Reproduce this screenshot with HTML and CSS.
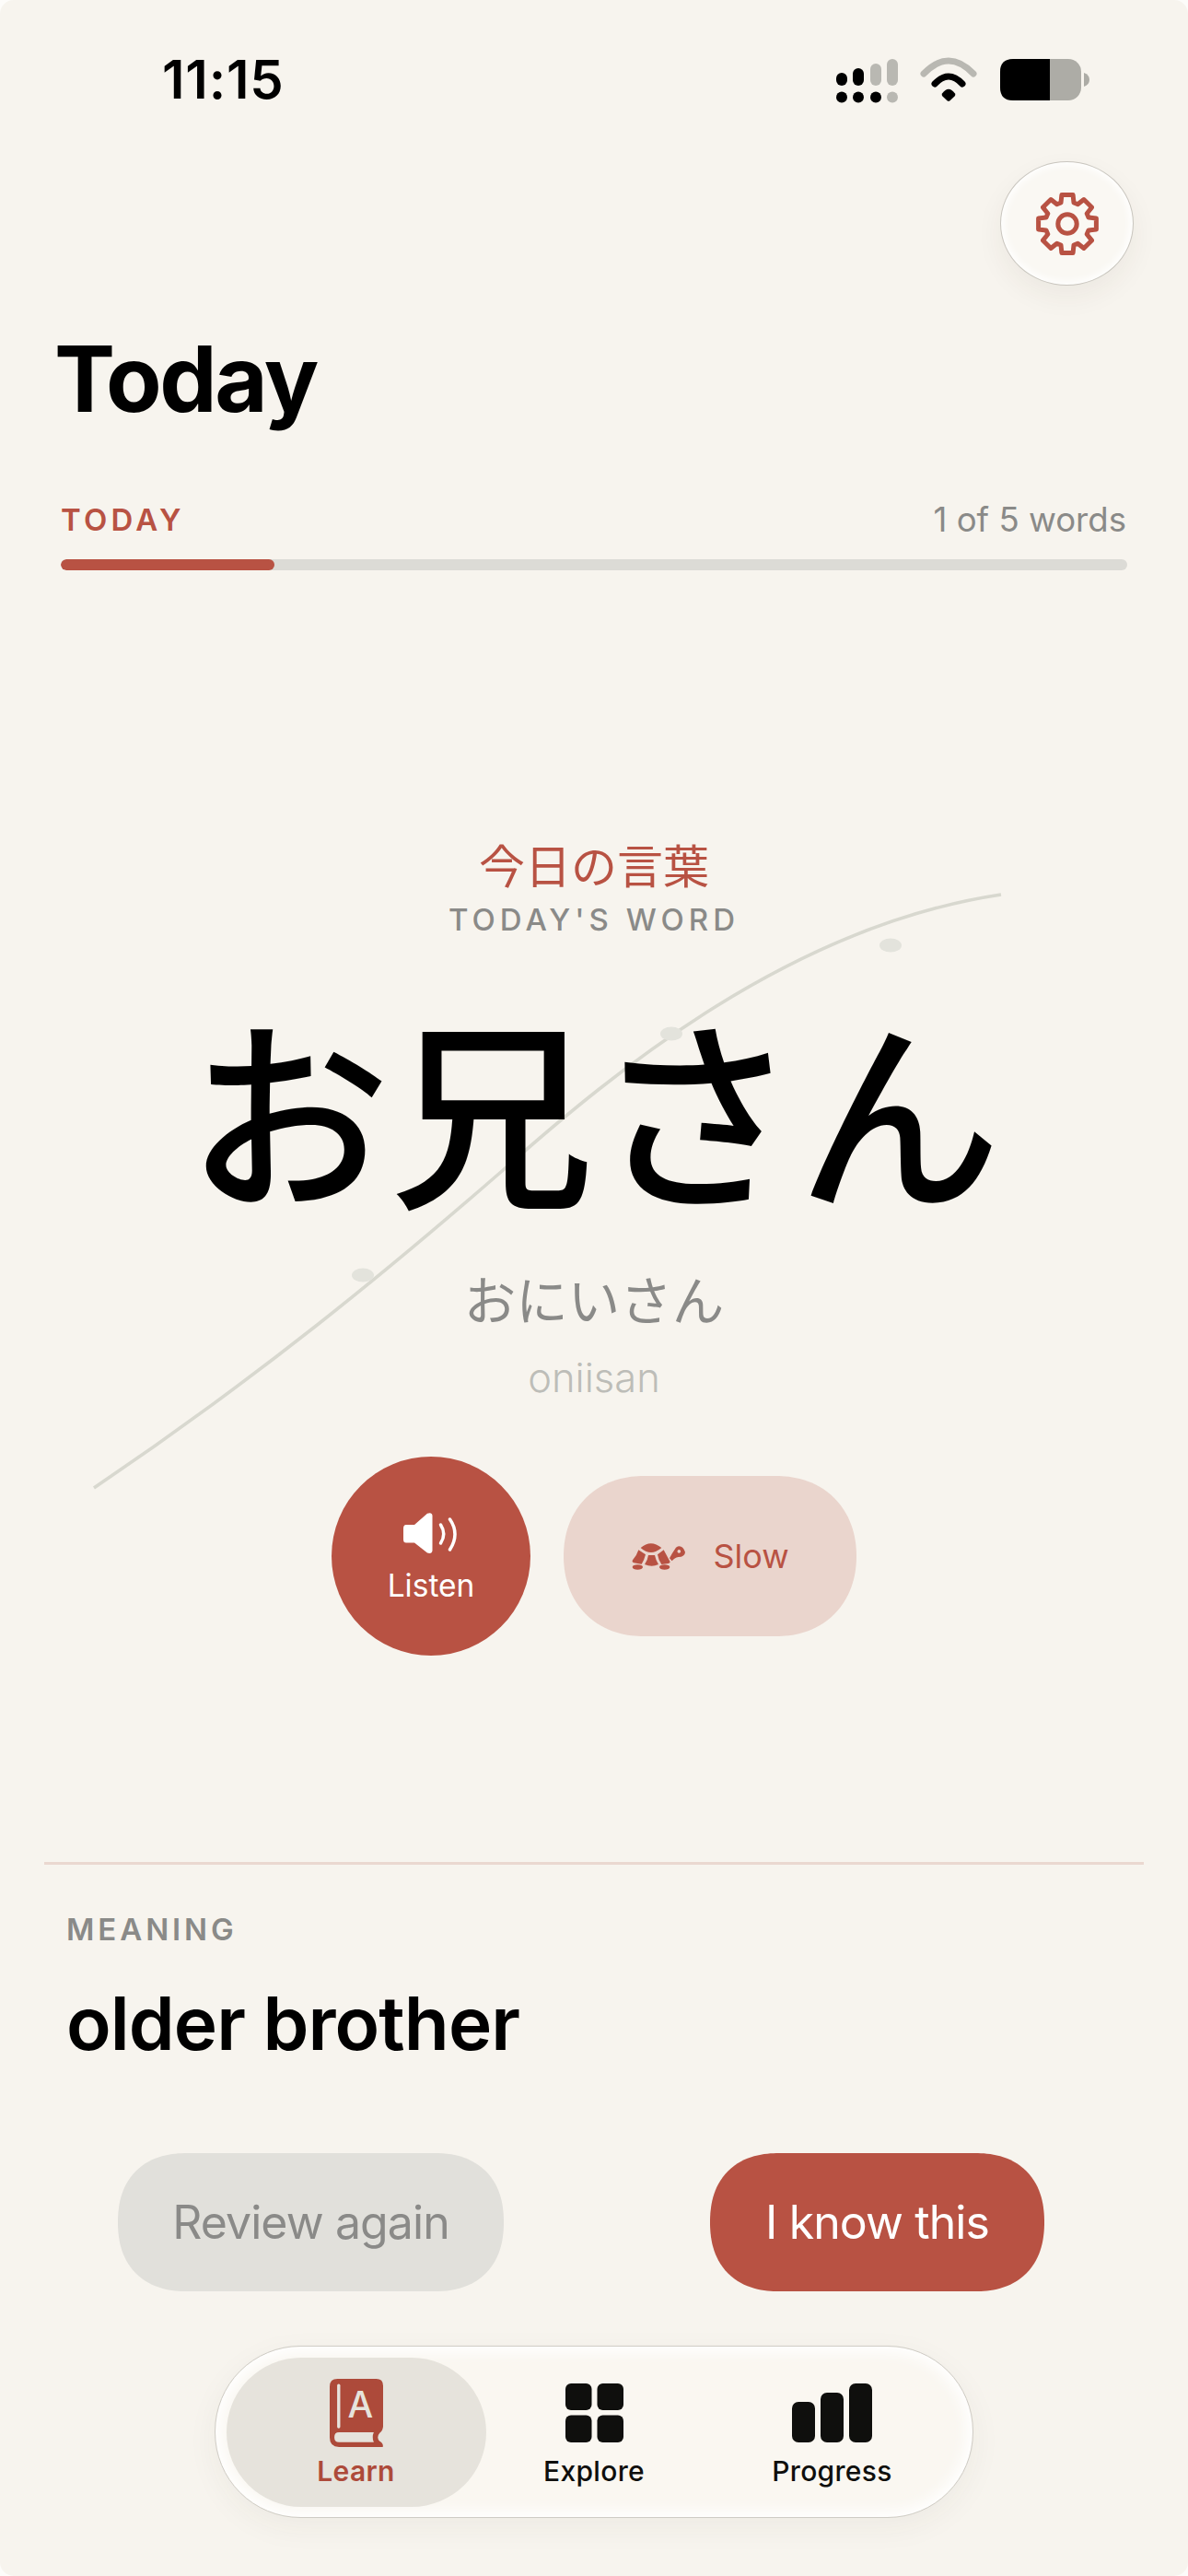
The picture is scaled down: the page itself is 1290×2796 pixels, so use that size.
FILE: index.html
```html
<!DOCTYPE html>
<html lang="en">
<head>
    <meta charset="UTF-8">
    <meta name="viewport" content="width=device-width, initial-scale=1.0">
    <title>Today</title>
    <link rel="stylesheet" href="styles.css">
</head>
<body>
    <div class="phone">
        <div class="status-bar">
            <div class="time">11:15</div>
            <div class="status-icons">
                <svg class="signal" viewBox="0 0 68 48">
                    <rect x="0" y="15" width="12" height="14" rx="6"/>
                    <rect x="18" y="10" width="12" height="19" rx="6"/>
                    <rect class="dim" x="37" y="5" width="12" height="24" rx="6"/>
                    <rect class="dim" x="55" y="0" width="12" height="29" rx="6"/>
                    <circle cx="6" cy="41.5" r="6"/>
                    <circle cx="24" cy="41.5" r="6"/>
                    <circle cx="43" cy="41.5" r="6"/>
                    <circle class="dim" cx="61" cy="41.5" r="6"/>
                </svg>
                <svg class="wifi" viewBox="0 0 64 52">
                    <path class="wifi-far" d="M5 19 Q32 -9 59 19"/>
                    <path class="wifi-near" d="M17 30 Q32 14 47 30"/>
                    <path d="M25 40.5 Q32 31 39 40.5 Q40 42 38.5 43.5 L33.2 48.5 Q32 49.2 30.8 48.5 L25.5 43.5 Q24 42 25 40.5z"/>
                </svg>
                <svg class="battery" viewBox="0 0 97 45">
                    <rect class="battery-rest" x="0" y="0" width="88" height="45" rx="14"/>
                    <path d="M14 0 H54 V45 H14 Q0 45 0 31 V14 Q0 0 14 0z"/>
                    <path class="battery-rest" d="M91 15 Q97 17 97 22.5 Q97 28 91 30z"/>
                </svg>
            </div>
        </div>

        <div class="top-actions">
            <div class="settings-button">
                <svg class="gear" viewBox="-36 -36 72 72">
                    <path d="M6.1 -31.4 L7 -23 L11.3 -21.2 L17.9 -26.5 L26.5 -17.9 L21.2 -11.3 L23 -7 L31.4 -6.1 L31.4 6.1 L23 7 L21.2 11.3 L26.5 17.9 L17.9 26.5 L11.3 21.2 L7 23 L6.1 31.4 L-6.1 31.4 L-7 23 L-11.3 21.2 L-17.9 26.5 L-26.5 17.9 L-21.2 11.3 L-23 7 L-31.4 6.1 L-31.4 -6.1 L-23 -7 L-21.2 -11.3 L-26.5 -17.9 L-17.9 -26.5 L-11.3 -21.2 L-7 -23 L-6.1 -31.4 Z"/>
                    <circle cx="0" cy="0" r="10.2"/>
                </svg>
            </div>
        </div>

        <h1 class="page-title">Today</h1>

        <div class="progress">
            <div class="progress-labels">
                <span class="progress-name">TODAY</span>
                <span class="progress-count">1 of 5 words</span>
            </div>
            <div class="progress-track">
                <div class="progress-fill" style="width: 20%"></div>
            </div>
        </div>

        <div class="word-area">
            <svg class="stroke-guide" viewBox="0 0 1290 1402">
                <path d="M102 996 C280 876 420 761 544 653 C670 541 860 386 1087 352"/>
                <ellipse cx="967" cy="407" rx="12" ry="7.5"/>
                <ellipse cx="729" cy="503" rx="12" ry="7.5"/>
                <ellipse cx="394" cy="765" rx="12" ry="7.5"/>
            </svg>
            <div class="word-eyebrow" lang="ja">今日の言葉</div>
            <div class="word-caption">TODAY'S WORD</div>
            <div class="word-main" lang="ja">お兄さん</div>
            <div class="word-kana" lang="ja">おにいさん</div>
            <div class="word-romaji">oniisan</div>
            <div class="audio-buttons">
                <div class="listen-button">
                    <svg class="speaker" viewBox="0 0 62 48">
                        <path class="speaker-body" d="M4 14 H13 L27 1.8 Q32 0 32.5 4 V42 Q32 46 27 44.5 L13 33.5 H4 Q1 33.5 1 30 V18 Q1 14 4 14Z"/>
                        <path class="speaker-wave" d="M41.5 14 Q48 24 41.5 34"/>
                        <path class="speaker-wave" d="M51.5 8 Q62.5 24 51.5 41"/>
                    </svg>
                    <span>Listen</span>
                </div>
                <div class="slow-button">
                    <svg class="turtle" viewBox="50 15 180 96">
                        <path d="M82 36 Q115 8 150 36 Q132 51 116 51 Q98 51 82 36Z"/>
                        <path d="M75 43 L98 58 Q94 75 85 89 L60 85 Q52 82 56 76 Q69 62 75 43Z"/>
                        <path d="M107 60 H128 Q131 76 140 90 Q118 100 95 90 Q105 76 107 60Z"/>
                        <path d="M137 58 L157 43 L178 82 Q178 86 172 87 L150 90 Q140 76 137 58Z"/>
                        <path fill-rule="evenodd" d="M176 70 Q185 52 197 35 Q216 22 227 50 Q226 65 205 66 Q192 68 184 79Z M207 42 a5.5 5.5 0 1 0 0.01 0Z"/>
                        <ellipse cx="72" cy="99" rx="17" ry="8"/>
                        <ellipse cx="160" cy="99" rx="17" ry="8"/>
                    </svg>
                    <span>Slow</span>
                </div>
            </div>
        </div>

        <div class="divider"></div>

        <div class="meaning">
            <div class="meaning-label">MEANING</div>
            <div class="meaning-text">older brother</div>
        </div>

        <div class="answer-buttons">
            <div class="answer-button review">Review again</div>
            <div class="answer-button know">I know this</div>
        </div>

        <div class="tab-bar">
            <div class="tab active">
                <div class="tab-icon">
                    <svg class="book" viewBox="55 38 172 219">
                        <path d="M80 38 H205 Q227 38 227 60 V190 Q227 204 216 212 Q204 226 216 239 Q229 247 226 257 H85 Q55 257 55 227 V63 Q55 38 80 38Z"/>
                        <path class="book-page" d="M85 210 H197 Q190 226 197 242 H85 Q70 242 70 226 Q70 210 85 210Z"/>
                        <path class="book-line" d="M84 59 V192"/>
                        <text class="book-letter" x="154" y="162" text-anchor="middle">A</text>
                    </svg>
                </div>
                <span>Learn</span>
            </div>
            <div class="tab">
                <div class="tab-icon">
                    <svg class="explore" viewBox="0 0 63 64">
                        <rect x="0" y="0" width="28.5" height="29" rx="6"/>
                        <rect x="34.5" y="0" width="28.5" height="29" rx="6"/>
                        <rect x="0" y="34.5" width="28.5" height="29.5" rx="6"/>
                        <rect x="34.5" y="34.5" width="28.5" height="29.5" rx="6"/>
                    </svg>
                </div>
                <span>Explore</span>
            </div>
            <div class="tab">
                <div class="tab-icon">
                    <svg class="bars" viewBox="0 0 87 64">
                        <rect x="0" y="20" width="25" height="44" rx="7"/>
                        <rect x="31" y="10" width="25" height="54" rx="7"/>
                        <rect x="62" y="0" width="25" height="64" rx="7"/>
                    </svg>
                </div>
                <span>Progress</span>
            </div>
        </div>
    </div>
</body>
</html>
```

FILE: styles.css
```css
html {
    background-color: #fdfcfa;
}
body {
    margin: 0;
    font-family: Inter, "Noto Sans CJK JP", sans-serif;
    color: #000;
}
.phone {
    width: 1290px;
    height: 2796px;
    overflow: hidden;
    background-color: #f7f4ee;
    border-radius: 15px;
}

/* status bar */
.status-bar {
    height: 172px;
    display: flex;
    justify-content: space-between;
    align-items: center;
    padding: 0 107px 0 176px;
}
.time {
    font-size: 58px;
    line-height: 68px;
    font-weight: 600;
    letter-spacing: 0.8px;
}
.status-icons {
    display: flex;
    align-items: center;
    gap: 22px;
}
.status-icons .dim {
    fill: #b9b8b2;
}
.signal {
    width: 68px;
    height: 48px;
    margin-top: 4px;
}
.wifi {
    width: 64px;
    height: 52px;
    margin-top: 2px;
}
.wifi path {
    fill: #000;
}
.wifi .wifi-far,
.wifi .wifi-near {
    fill: none;
    stroke-width: 7;
    stroke-linecap: round;
}
.wifi .wifi-far {
    stroke: #b9b8b2;
}
.wifi .wifi-near {
    stroke: #000;
}
.battery {
    width: 97px;
    height: 45px;
    margin-left: 2px;
    margin-top: 1px;
}
.battery .battery-rest {
    fill: #adaca6;
}

/* settings */
.top-actions {
    display: flex;
    justify-content: flex-end;
    padding: 3px 59px 0 0;
}
.settings-button {
    width: 145px;
    height: 135px;
    box-sizing: border-box;
    border: 1.5px solid #c9c6bf;
    border-radius: 50%;
    background-color: #faf8f3;
    box-shadow: inset 0 0 8px 3px #fff, 0 12px 30px rgba(60, 50, 40, 0.06);
    display: flex;
    justify-content: center;
    align-items: center;
}
.gear {
    width: 72px;
    height: 72px;
    fill: none;
    stroke: #b85243;
    stroke-width: 5;
    stroke-linejoin: round;
}

.page-title {
    margin: 41px 0 0 59px;
    font-size: 99px;
    line-height: 120px;
    font-weight: 700;
    letter-spacing: -2.4px;
}

/* progress */
.progress {
    margin-top: 73px;
    padding: 0 66px;
}
.progress-labels {
    display: flex;
    justify-content: space-between;
    line-height: 40px;
}
.progress-name {
    font-size: 33px;
    font-weight: 600;
    letter-spacing: 4.2px;
    color: #b85243;
}
.progress-count {
    font-size: 36.6px;
    color: #8a8a88;
    margin-right: 1px;
}
.progress-track {
    height: 12px;
    margin-top: 23px;
    border-radius: 6px;
    background-color: #dcdbd6;
    overflow: hidden;
}
.progress-fill {
    height: 100%;
    border-radius: 6px;
    background-color: #b85243;
}

/* word */
.word-area {
    position: relative;
    height: 1402px;
    box-sizing: border-box;
    padding-top: 292px;
    text-align: center;
}
.stroke-guide {
    position: absolute;
    left: 0;
    top: 0;
    width: 1290px;
    height: 1402px;
}
.stroke-guide path {
    fill: none;
    stroke: #d8d8cf;
    stroke-width: 3.6;
}
.stroke-guide ellipse {
    fill: #e3e3dc;
}
.word-eyebrow,
.word-caption,
.word-main,
.word-kana,
.word-romaji,
.audio-buttons {
    position: relative;
}
.word-eyebrow {
    font-size: 50px;
    line-height: 60px;
    color: #b85243;
}
.word-caption {
    margin-top: 7px;
    font-size: 33px;
    line-height: 40px;
    font-weight: 500;
    letter-spacing: 5px;
    color: #8a8a88;
}
.word-main {
    margin-top: 67px;
    font-size: 221px;
    line-height: 260px;
    font-weight: 500;
}
.word-kana {
    margin-top: 34px;
    font-size: 56.5px;
    line-height: 68px;
    font-weight: 400;
    color: #8a8a88;
}
.word-romaji {
    margin-top: 24px;
    font-size: 43.5px;
    line-height: 48px;
    font-weight: 300;
    color: #bdbdb8;
}
.audio-buttons {
    margin-top: 62px;
    display: flex;
    justify-content: center;
    align-items: center;
    gap: 36px;
}
.listen-button {
    width: 216px;
    height: 216px;
    border-radius: 50%;
    background-color: #b85243;
    color: #fff;
    font-size: 33.5px;
    line-height: 40px;
    font-weight: 400;
    display: flex;
    flex-direction: column;
    align-items: center;
    gap: 12px;
    padding-top: 60px;
    box-sizing: border-box;
}
.speaker {
    width: 62px;
    height: 48px;
}
.speaker-body {
    fill: #fff;
}
.speaker-wave {
    fill: none;
    stroke: #fff;
    stroke-width: 3.5;
    stroke-linecap: round;
}
.slow-button {
    width: 318px;
    height: 174px;
    border-radius: 87px;
    corner-shape: superellipse(1.1);
    background-color: #ead5cd;
    color: #b85243;
    font-size: 36px;
    display: flex;
    justify-content: center;
    align-items: center;
    gap: 29px;
}
.turtle {
    width: 60px;
    height: 32px;
    fill: #b85243;
}

.divider {
    height: 3px;
    margin: 0 48px;
    background-color: #ead8d0;
}

/* meaning */
.meaning {
    padding: 50px 72px 0;
}
.meaning-label {
    font-size: 33px;
    line-height: 40px;
    font-weight: 600;
    letter-spacing: 3.9px;
    color: #8a8a88;
}
.meaning-text {
    margin-top: 35px;
    font-size: 80px;
    line-height: 94px;
    font-weight: 600;
    letter-spacing: -0.9px;
}

.answer-buttons {
    margin-top: 94px;
    padding: 0 156px 0 128px;
    display: flex;
    justify-content: space-between;
}
.answer-button {
    height: 150px;
    border-radius: 75px;
    corner-shape: superellipse(1.2);
    font-size: 50px;
    letter-spacing: -0.9px;
    font-weight: 400;
    display: flex;
    justify-content: center;
    align-items: center;
}
.answer-button.review {
    width: 419px;
    background-color: #e1e0db;
    color: #8a8a88;
}
.answer-button.know {
    width: 363px;
    background-color: #b85243;
    color: #fff;
}

/* tab bar */
.tab-bar {
    width: 824px;
    height: 187px;
    box-sizing: border-box;
    margin: 59px auto 0;
    padding: 11.5px;
    border: 1.5px solid #cfccc5;
    border-radius: 93px;
    background-color: #faf7f1;
    box-shadow: inset 0 0 16px 6px #fff, 0 10px 34px rgba(60, 50, 40, 0.05);
    display: grid;
    grid-template-columns: 282px 1fr 282px;
}
.tab {
    display: flex;
    flex-direction: column;
    align-items: center;
    color: #0f0f0d;
    font-size: 30px;
    line-height: 36px;
    font-weight: 500;
    letter-spacing: 0.3px;
    border-radius: 81px;
    padding-top: 23px;
    gap: 8px;
}
.tab.active {
    background-color: #e6e3dc;
    color: #ad4a3a;
    font-weight: 600;
}
.tab-icon {
    height: 74px;
    display: flex;
    align-items: center;
}
.book {
    width: 58px;
    height: 74px;
    fill: #ad4a3a;
}
.book .book-page {
    fill: #e6e3dc;
}
.book .book-line {
    fill: none;
    stroke: #e6e3dc;
    stroke-width: 10;
    stroke-linecap: round;
}
.book .book-letter {
    fill: #e6e3dc;
    font-size: 116px;
    font-weight: 500;
}
.explore {
    width: 63px;
    height: 64px;
    fill: #0f0f0d;
}
.bars {
    width: 87px;
    height: 64px;
    fill: #0f0f0d;
}
```
